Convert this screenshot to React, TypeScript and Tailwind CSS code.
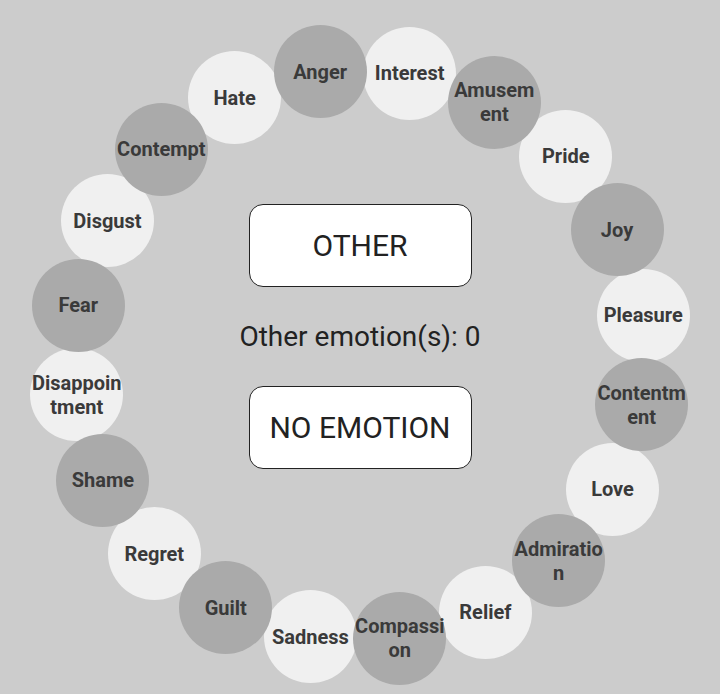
const emotions = [
  'Anger', 'Interest', 'Amusement', 'Pride', 'Joy', 'Pleasure', 'Contentment', 'Love', 'Admiration', 'Relief',
  'Compassion', 'Sadness', 'Guilt', 'Regret', 'Shame', 'Disappointment', 'Fear', 'Disgust', 'Contempt', 'Hate',
]

// ring geometry, in px
const CX = 360
const CY = 355
const R = 286
const D = 93

export default function App() {
  return (
    <div className="relative w-[720px] h-[694px] bg-[#cccccc] overflow-hidden font-['Roboto',sans-serif]">
      {emotions.map((name, i) => {
        const a = ((-8 + i * 18) * Math.PI) / 180
        const x = CX + R * Math.sin(a) - D / 2
        const y = CY - R * Math.cos(a) - D / 2
        const dark = i % 2 === 0
        return (
          <div
            key={name}
            className={`absolute w-[93px] h-[93px] rounded-full flex items-center justify-center text-center ${dark ? 'bg-[#aaaaaa] z-10' : 'bg-[#f0f0f0]'}`}
            style={{ left: x, top: y }}
          >
            <span className="w-[90px] break-all text-[20px] leading-[24px] font-bold text-[#3a3a3a]">{name}</span>
          </div>
        )
      })}

      <div className="absolute inset-0 flex flex-col items-center pt-[204px]">
        <button className="w-[223px] h-[83px] bg-white border border-[#222] rounded-[14px] text-[30px] text-[#222]">
          OTHER
        </button>
        <div className="mt-[34px] text-[28px] leading-[32px] text-[#222]">Other emotion(s): 0</div>
        <button className="mt-[33px] w-[223px] h-[83px] bg-white border border-[#222] rounded-[14px] text-[30px] text-[#222]">
          NO EMOTION
        </button>
      </div>
    </div>
  )
}
